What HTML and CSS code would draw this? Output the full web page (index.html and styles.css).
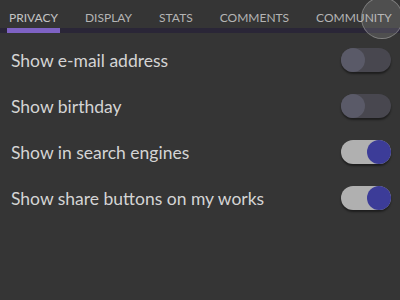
FILE: index.html
```html
<!DOCTYPE html>
<html>
<head>
<meta charset="utf-8">
<link rel="stylesheet" href="styles.css">
</head>
<body>
<div class="tabs">
  <div class="tab active">PRIVACY</div>
  <div class="tab">DISPLAY</div>
  <div class="tab">STATS</div>
  <div class="tab">COMMENTS</div>
  <div class="tab">COMMUNITY</div>
  <div class="ripple"></div>
</div>
<div class="list">
  <div class="row"><span>Show e-mail address</span><div class="toggle"><div class="knob"></div></div></div>
  <div class="row"><span>Show birthday</span><div class="toggle"><div class="knob"></div></div></div>
  <div class="row"><span>Show in search engines</span><div class="toggle on"><div class="knob"></div></div></div>
  <div class="row"><span>Show share buttons on my works</span><div class="toggle on"><div class="knob"></div></div></div>
</div>
</body>
</html>
```
FILE: styles.css
```css
html, body { margin: 0; padding: 0; }
body {
  width: 400px; height: 300px; overflow: hidden;
  background: #353535;
  font-family: Lato, "Open Sans", sans-serif;
  color: #d0d0d0;
}
.tabs {
  position: relative;
  display: flex;
  height: 28px;
  padding-left: 7px;
  border-bottom: 5px solid #2a2637;
}
.tab {
  font-size: 12px;
  color: #b4b4b4;
  padding: 10px 2px 0 2px;
  margin-right: 23px;
  position: relative;
}
.tab.active { color: #c4c4c4; }
.tab.active::after {
  content: "";
  position: absolute;
  left: 0; right: 0; bottom: -5px;
  height: 5px;
  background: #7e62c4;
}
.ripple {
  position: absolute;
  left: 362px; top: -2px;
  width: 40px; height: 40px;
  border-radius: 50%;
  background: rgba(200,200,200,0.18);
  box-shadow: 0 0 0 1px rgba(220,220,220,0.45);
}
.list { padding: 4px 9px 0 11px; }
.row {
  display: flex;
  align-items: center;
  justify-content: space-between;
  height: 46px;
  font-size: 17.5px;
  color: #d4d4d4;
}
.toggle {
  width: 50px; height: 24px;
  border-radius: 12px;
  background: #48474f;
  position: relative;
  box-shadow: 0 2px 2px rgba(0,0,0,0.45);
}
.knob {
  position: absolute; top: 0; left: 0;
  width: 24px; height: 24px; border-radius: 50%;
  background: #5a5a68;
}
.toggle.on { background: #b0b0b0; }
.toggle.on .knob { left: 26px; background: #3c3c98; }
```
